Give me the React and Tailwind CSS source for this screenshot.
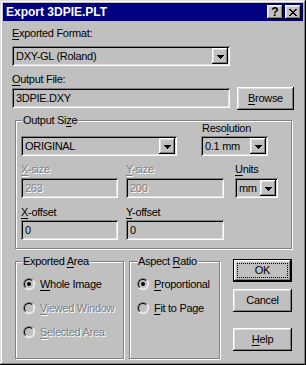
import React from "react";

// Win95 bevels
const raised =
  "shadow-[inset_-1px_-1px_#000,inset_1px_1px_#fff,inset_-2px_-2px_#808080,inset_2px_2px_#dfdfdf]";
const sunken =
  "shadow-[inset_1px_1px_#808080,inset_-1px_-1px_#fff,inset_2px_2px_#000,inset_-2px_-2px_#dfdfdf]";
const etched = "border border-[#808080] shadow-[1px_1px_0_#fff,inset_1px_1px_0_#fff]";
const dim = "text-[#808080] [text-shadow:1px_1px_0_#fff]";

function Key({ children }) {
  return <u className="underline underline-offset-[2px]">{children}</u>;
}

function DropButton() {
  return (
    <div className={`w-[16px] h-[16px] shrink-0 bg-[#c0c0c0] flex items-center justify-center ${raised}`}>
      <svg width="7" height="4" viewBox="0 0 7 4" className="mt-[1px]">
        <path d="M0 0h7v1H0zM1 1h5v1H1zM2 2h3v1H2zM3 3h1v1H3z" fill="#000" />
      </svg>
    </div>
  );
}

function Field({ width, combo, disabled, children }) {
  return (
    <div className={`${width} h-[20px] shrink-0 bg-[#c0c0c0] flex items-center pl-[4px] pr-[2px] ${sunken}`}>
      <span className={`flex-1 leading-[13px] whitespace-nowrap ${disabled ? dim : ""}`}>{children}</span>
      {combo && <DropButton />}
    </div>
  );
}

function Button({ children, primary, className = "" }) {
  if (primary) {
    return (
      <div className={`w-[59px] h-[23px] border border-black ${className}`}>
        <div className={`w-full h-full flex items-center justify-center p-[3px] ${raised}`}>
          <div className="w-full h-full border border-dotted border-black flex items-center justify-center">
            {children}
          </div>
        </div>
      </div>
    );
  }
  return (
    <div className={`w-[59px] h-[23px] flex items-center justify-center ${raised} ${className}`}>{children}</div>
  );
}

function Group({ title, titleLeft, className = "", children }) {
  return (
    <div className={`relative ${etched} ${className}`}>
      <span className={`absolute top-[-7px] ${titleLeft} px-[1px] bg-[#c0c0c0] leading-[13px] whitespace-nowrap`}>
        {title}
      </span>
      {children}
    </div>
  );
}

function Radio({ checked, disabled, children }) {
  return (
    <div className="h-[24px] flex items-center gap-[5px]">
      <div className="w-[12px] h-[12px] rounded-full border border-t-[#808080] border-l-[#808080] border-r-white border-b-white">
        <div className="w-[10px] h-[10px] rounded-full border border-t-black border-l-black border-r-[#dfdfdf] border-b-[#dfdfdf] bg-[#c0c0c0] flex items-center justify-center">
          {checked && <div className="w-[4px] h-[4px] rounded-full bg-black" />}
        </div>
      </div>
      <span className={`leading-[13px] whitespace-nowrap ${disabled ? dim : ""}`}>{children}</span>
    </div>
  );
}

function TitleButton({ children }) {
  return (
    <div className={`w-[16px] h-[14px] bg-[#c0c0c0] flex items-center justify-center ${raised}`}>{children}</div>
  );
}

export default function App() {
  return (
    <div
      className={`w-[306px] h-[365px] bg-[#c0c0c0] p-[3px] flex flex-col text-[11px] tracking-[-0.3px] text-black font-['Liberation_Sans',Arial,sans-serif] shadow-[inset_-1px_-1px_#000,inset_1px_1px_#dfdfdf,inset_-2px_-2px_#808080,inset_2px_2px_#fff]`}
    >
      {/* title bar */}
      <div className="h-[18px] shrink-0 bg-[#000080] flex items-center justify-between pl-[3px] pr-[2px]">
        <span className="text-white font-bold text-[12px] tracking-normal leading-[14px]">Export 3DPIE.PLT</span>
        <div className="flex gap-[2px]">
          <TitleButton>
            <span className="font-bold text-[12px] leading-[12px] tracking-normal">?</span>
          </TitleButton>
          <TitleButton>
            <svg width="8" height="7" viewBox="0 0 8 7">
              <path
                d="M0 0h2v1H0zM6 0h2v1H6zM1 1h2v1H1zM5 1h2v1H5zM2 2h4v1H2zM3 3h2v1H3zM2 4h4v1H2zM1 5h2v1H1zM5 5h2v1H5zM0 6h2v1H0zM6 6h2v1H6z"
                fill="#000"
              />
            </svg>
          </TitleButton>
        </div>
      </div>

      <div className="flex flex-col pl-[9px]">
        <div className="mt-[6px] leading-[13px]">
          <Key>E</Key>xported Format:
        </div>
        <div className="mt-[6px]">
          <Field width="w-[218px]" combo>
            DXY-GL (Roland)
          </Field>
        </div>

        <div className="mt-[7px] leading-[13px]">
          <Key>O</Key>utput File:
        </div>
        <div className="mt-[1px] flex items-start gap-[7px]">
          <div className="mt-[1px]">
            <Field width="w-[218px]">3DPIE.DXY</Field>
          </div>
          <div className={`w-[57px] h-[23px] flex items-center justify-center ${raised}`}>
            <span>
              <Key>B</Key>rowse
            </span>
          </div>
        </div>

        {/* Output Size */}
        <Group
          className="mt-[10px] ml-[3px] w-[277px] pl-[5px] pt-[1px] pb-[8px]"
          titleLeft="left-[6px]"
          title={
            <>
              Output Si<Key>z</Key>e
            </>
          }
        >
          <div className="flex items-end">
            <Field width="w-[156px]" combo>
              ORIGINAL
            </Field>
            <div className="ml-[24px] flex flex-col">
              <div className="leading-[13px] pl-[1px]">
                Reso<Key>l</Key>ution
              </div>
              <div className="mt-[1px]">
                <Field width="w-[67px]" combo>
                  0.1 mm
                </Field>
              </div>
            </div>
          </div>

          <div className="mt-[7px] flex">
            <div className="w-[97px] flex flex-col">
              <div className={`leading-[13px] ${dim}`}>
                <Key>X</Key>-size
              </div>
              <div className="mt-[2px]">
                <Field width="w-[97px]" disabled>
                  263
                </Field>
              </div>
            </div>
            <div className="ml-[8px] w-[98px] flex flex-col">
              <div className={`leading-[13px] ${dim}`}>
                <Key>Y</Key>-size
              </div>
              <div className="mt-[2px]">
                <Field width="w-[98px]" disabled>
                  200
                </Field>
              </div>
            </div>
            <div className="ml-[11px] w-[43px] flex flex-col">
              <div className="leading-[13px]">
                <Key>U</Key>nits
              </div>
              <div className="mt-[2px]">
                <Field width="w-[43px]" combo>
                  mm
                </Field>
              </div>
            </div>
          </div>

          <div className="mt-[8px] flex">
            <div className="w-[97px] flex flex-col">
              <div className="leading-[13px]">
                <Key>X</Key>-offset
              </div>
              <div className="mt-[1px]">
                <Field width="w-[97px]">0</Field>
              </div>
            </div>
            <div className="ml-[8px] w-[98px] flex flex-col">
              <div className="leading-[13px]">
                <Key>Y</Key>-offset
              </div>
              <div className="mt-[1px]">
                <Field width="w-[98px]">0</Field>
              </div>
            </div>
          </div>
        </Group>

        {/* bottom row */}
        <div className="mt-[10px] ml-[3px] flex items-start">
          <Group
            className="mt-[2px] w-[109px] h-[98px] pl-[7px] pt-[10px]"
            titleLeft="left-[6px]"
            title={
              <>
                Exported <Key>A</Key>rea
              </>
            }
          >
            <Radio checked>
              <Key>W</Key>hole Image
            </Radio>
            <Radio disabled>
              <Key>V</Key>iewed Window
            </Radio>
            <Radio disabled>
              <Key>S</Key>elected Area
            </Radio>
          </Group>

          <Group
            className="mt-[2px] ml-[5px] w-[91px] h-[98px] pl-[7px] pt-[10px]"
            titleLeft="left-[7px]"
            title={
              <>
                Aspect <Key>R</Key>atio
              </>
            }
          >
            <Radio checked>
              <Key>P</Key>roportional
            </Radio>
            <Radio>
              <Key>F</Key>it to Page
            </Radio>
          </Group>

          <div className="ml-[13px] flex flex-col">
            <Button primary>OK</Button>
            <Button className="mt-[7px]">Cancel</Button>
            <Button className="mt-[16px]">
              <span>
                <Key>H</Key>elp
              </span>
            </Button>
          </div>
        </div>
      </div>
    </div>
  );
}
